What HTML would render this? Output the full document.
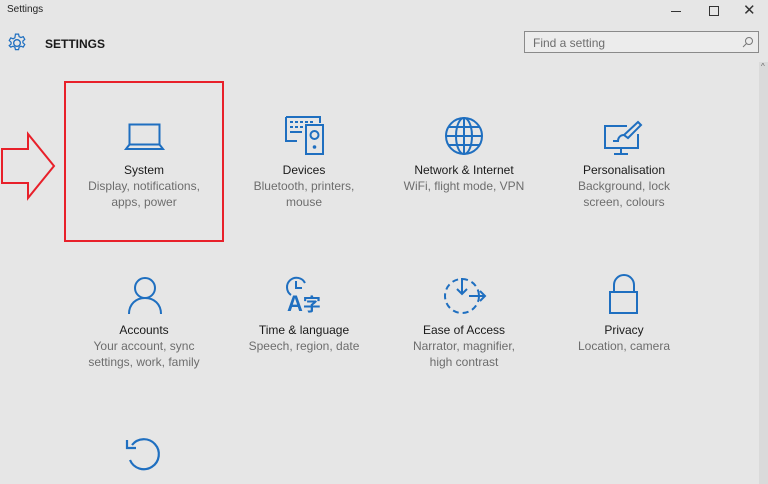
<!DOCTYPE html>
<html><head><meta charset="utf-8"><style>
body{margin:0;width:768px;height:484px;background:#e6e6e6;font-family:"Liberation Sans",sans-serif;position:relative;overflow:hidden}
.a{position:absolute}
.t{position:absolute;width:160px;text-align:center;font-size:12px;line-height:16px;color:#1a1a1a}
.t span{display:block;color:#6d6d6d}
svg{position:absolute;overflow:visible}
</style></head><body>
<div class="a" style="left:7px;top:4px;font-size:10px;color:#222">Settings</div>
<div class="a" style="left:671px;top:11px;width:10px;height:1px;background:#333"></div>
<div class="a" style="left:709px;top:6px;width:8px;height:8px;border:1px solid #333"></div>
<div class="a" style="left:743px;top:1px;font-size:15px;color:#333">✕</div>
<svg style="left:7px;top:33px" width="20" height="20" viewBox="0 0 18 18"><circle cx="9" cy="9" r="3" fill="none" stroke="#1f6fc0" stroke-width="1.2"/><path d="M7.6 1h2.8l.5 2.2 1.6.9 2.1-.8 1.4 2.4-1.7 1.5v1.6l1.7 1.5-1.4 2.4-2.1-.8-1.6.9-.5 2.2H7.6l-.5-2.2-1.6-.9-2.1.8L2 11.4l1.7-1.5V8.3L2 6.8l1.4-2.4 2.1.8 1.6-.9z" fill="none" stroke="#1f6fc0" stroke-width="1.1"/></svg>
<div class="a" style="left:45px;top:37px;font-size:12px;font-weight:bold;color:#1a1a1a">SETTINGS</div>
<div class="a" style="left:524px;top:31px;width:235px;height:22px;border:1px solid #8a8a8a;background:#ececec;box-sizing:border-box"></div>
<div class="a" style="left:533px;top:36px;font-size:12px;color:#6d6d6d">Find a setting</div>
<svg style="left:742px;top:36px" width="12" height="12"><circle cx="7" cy="5" r="3.5" fill="none" stroke="#777"/><path d="M4.5 7.5L1 11" stroke="#777"/></svg>
<div class="a" style="left:759px;top:62px;width:9px;height:422px;background:#dadada"></div>
<div class="a" style="left:761px;top:62px;font-size:8px;color:#666">^</div>
<div class="a" style="left:64px;top:81px;width:160px;height:161px;border:2px solid #e8202a;box-sizing:border-box"></div>
<svg style="left:0;top:133px" width="56" height="67"><path d="M2 16H28V1L54 33 28 65V50H2Z" fill="none" stroke="#e8202a" stroke-width="2"/></svg>
<svg style="left:125px;top:123px" width="40" height="28"><rect x="4.5" y="1.5" width="30" height="20" fill="none" stroke="#1f6fc0" stroke-width="2"/><path d="M4.5 21.5L1 26H38L34.5 21.5" fill="none" stroke="#1f6fc0" stroke-width="2"/></svg>
<svg style="left:285px;top:116px" width="40" height="40"><path d="M1 1h34v6M1 1v24h11" fill="none" stroke="#1f6fc0" stroke-width="2"/><g fill="#1f6fc0"><rect x="5" y="5" width="3" height="2"/><rect x="10" y="5" width="3" height="2"/><rect x="15" y="5" width="3" height="2"/><rect x="20" y="5" width="3" height="2"/><rect x="25" y="5" width="3" height="2"/><rect x="5" y="10" width="3" height="2"/><rect x="10" y="10" width="3" height="2"/><rect x="15" y="10" width="3" height="2"/><rect x="5" y="15" width="12" height="2"/></g><rect x="21" y="9" width="17" height="29" fill="none" stroke="#1f6fc0" stroke-width="2"/><circle cx="29.5" cy="19" r="4" fill="none" stroke="#1f6fc0" stroke-width="2"/><circle cx="29.5" cy="31" r="1.8" fill="#1f6fc0"/></svg>
<svg style="left:444px;top:116px" width="40" height="40"><g fill="none" stroke="#1f6fc0" stroke-width="2"><circle cx="20" cy="20" r="18"/><ellipse cx="20" cy="20" rx="8" ry="18"/><path d="M20 2v36M2 20h36M5 11h30M5 29h30"/></g></svg>
<svg style="left:603px;top:120px" width="40" height="36"><g fill="none" stroke="#1f6fc0" stroke-width="2"><path d="M24 6H2v22h33V14"/><path d="M18 28v6M11 34h14"/><path d="M35 2l3 3-13 13-4-3z"/><path d="M21 15c-4 0-6 3-6 6h-5"/></g></svg>
<svg style="left:125px;top:275px" width="40" height="40"><g fill="none" stroke="#1f6fc0" stroke-width="2"><circle cx="20" cy="13" r="10"/><path d="M4 39c0-10 7-16 16-16s16 6 16 16"/></g></svg>
<svg style="left:286px;top:277px" width="24" height="22"><path d="M5 18A9.5 9.5 0 1 1 19 6" fill="none" stroke="#1f6fc0" stroke-width="2"/><path d="M10 4v7h6" fill="none" stroke="#1f6fc0" stroke-width="2"/></svg>
<div class="a" style="left:287px;top:293px;font-size:22px;font-weight:bold;color:#1f6fc0;line-height:22px">A<span style="font-family:'Noto Sans CJK SC',sans-serif;font-weight:bold;font-size:18px">字</span></div>
<svg style="left:443px;top:277px" width="44" height="38"><g fill="none" stroke="#1f6fc0" stroke-width="2"><circle cx="19" cy="19" r="17" stroke-dasharray="6 4"/><path d="M19 1v16M14 12l5 5 5-5M26 19h16M37 14l5 5-5 5"/></g></svg>
<svg style="left:607px;top:275px" width="34" height="40"><g fill="none" stroke="#1f6fc0" stroke-width="2"><path d="M7 17V10a10 10 0 0 1 20 0v7"/><rect x="3" y="17" width="27" height="21"/></g></svg>
<svg style="left:125px;top:435px" width="40" height="40"><g fill="none" stroke="#1f6fc0" stroke-width="2.2"><path d="M7 10A15 15 0 1 1 5 25"/><path d="M2 5v8h9"/></g></svg>
<div class="t" style="left:64px;top:162px">System<span>Display, notifications,</span><span>apps, power</span></div>
<div class="t" style="left:224px;top:162px">Devices<span>Bluetooth, printers,</span><span>mouse</span></div>
<div class="t" style="left:384px;top:162px">Network &amp; Internet<span>WiFi, flight mode, VPN</span></div>
<div class="t" style="left:544px;top:162px">Personalisation<span>Background, lock</span><span>screen, colours</span></div>
<div class="t" style="left:64px;top:322px">Accounts<span>Your account, sync</span><span>settings, work, family</span></div>
<div class="t" style="left:224px;top:322px">Time &amp; language<span>Speech, region, date</span></div>
<div class="t" style="left:384px;top:322px">Ease of Access<span>Narrator, magnifier,</span><span>high contrast</span></div>
<div class="t" style="left:544px;top:322px">Privacy<span>Location, camera</span></div>
</body></html>
